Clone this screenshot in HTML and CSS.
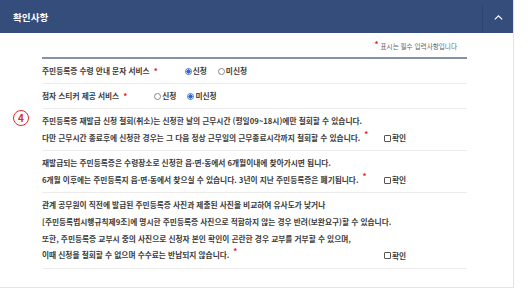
FILE: index.html
```html
<!DOCTYPE html>
<html lang="ko">
<head>
<meta charset="UTF-8">
<meta name="viewport" content="width=device-width, initial-scale=1.0">
<title>확인사항</title>
<link rel="stylesheet" href="styles.css">
</head>
<body>
<div class="panel">
    <div class="panel-head">
        <h2 class="panel-title">확인사항</h2>
        <button class="toggle" type="button" aria-label="접기">
            <svg width="9" height="5" viewBox="0 0 9 5"><path d="M0.8 4.4 L4.5 0.9 L8.2 4.4" fill="none" stroke="#fff" stroke-width="1.2"/></svg>
        </button>
    </div>

    <div class="panel-body">
        <p class="req-note"><span class="req">*</span> 표시는 필수 입력사항입니다</p>

        <span class="step-badge">4</span>

        <div class="confirm">
            <div class="row">
                <span class="label">주민등록증 수령 안내 문자 서비스</span><span class="req">*</span>
                <div class="radios">
                    <label><input type="radio" name="sms" checked>신청</label>
                    <label><input type="radio" name="sms">미신청</label>
                </div>
            </div>
            <div class="row">
                <span class="label">점자 스티커 제공 서비스</span><span class="req">*</span>
                <div class="radios">
                    <label><input type="radio" name="braille">신청</label>
                    <label><input type="radio" name="braille" checked>미신청</label>
                </div>
            </div>
            <div class="row notice">
                <div class="notice-text">
                    주민등록증 재발급 신청 철회(취소)는 신청한 날의 근무시간 (평일09~18시)에만 철회할 수 있습니다.<br>
                    다만 근무시간 종료후에 신청한 경우는 그 다음 정상 근무일의 근무종료시각까지 철회할 수 있습니다.<span class="req">*</span>
                </div>
                <label class="check"><input type="checkbox">확인</label>
            </div>
            <div class="row notice">
                <div class="notice-text">
                    재발급되는 주민등록증은 수령장소로 신청한 읍·면·동에서 6개월이내에 찾아가시면 됩니다.<br>
                    6개월 이후에는 주민등록지 읍·면·동에서 찾으실 수 있습니다. 3년이 지난 주민등록증은 폐기됩니다.<span class="req">*</span>
                </div>
                <label class="check"><input type="checkbox">확인</label>
            </div>
            <div class="row notice">
                <div class="notice-text">
                    관계 공무원이 직전에 발급된 주민등록증 사진과 제출된 사진을 비교하여 유사도가 낮거나<br>
                    [주민등록법시행규칙제9조]에 명시한 주민등록증 사진으로 적합하지 않는 경우 반려(보완요구)할 수 있습니다.<br>
                    또한, 주민등록증 교부시 중의 사진으로 신청자 본인 확인이 곤란한 경우 교부를 거부할 수 있으며,<br>
                    이때 신청을 철회할 수 없으며 수수료는 반납되지 않습니다.<span class="req">*</span>
                </div>
                <label class="check"><input type="checkbox">확인</label>
            </div>
        </div>
    </div>
</div>
</body>
</html>
```

FILE: styles.css
```css
body {
    margin: 0;
    font-family: "Noto Sans CJK KR", "Noto Sans", sans-serif;
    color: #333;
    background: #fff;
}
.panel {
    width: 514px;
    border-right: 1px solid #e4e4e4;
    border-bottom: 1px solid #e4e4e4;
    box-sizing: border-box;
}
.panel-head {
    display: flex;
    align-items: flex-end;
    height: 33px;
    background-color: #354d7b;
}
.panel-title {
    flex: 1;
    margin: 0;
    padding-left: 13px;
    align-self: center;
    font-size: 9.6px;
    font-weight: bold;
    color: #fff;
}
.toggle {
    width: 31px;
    height: 28px;
    padding: 0;
    border: none;
    border-left: 1px solid #2f4570;
    background: none;
    display: flex;
    align-items: center;
    justify-content: center;
    padding-bottom: 4px;
    cursor: pointer;
}
.panel-body {
    position: relative;
    padding: 8px 0 18px 42px;
}
.req-note {
    margin: 0 0 6px;
    width: 415px;
    text-align: right;
    font-size: 6.6px;
    line-height: 10px;
    color: #666;
}
.req {
    color: #e3141b;
    font-size: 8px;
    font-weight: bold;
    vertical-align: 4px;
    line-height: 0;
    margin-left: 4px;
}
.req-note .req {
    margin: 0;
    vertical-align: 2px;
}
.step-badge {
    position: absolute;
    left: 13px;
    top: 77px;
    width: 14px;
    height: 14px;
    border: 1.3px solid #e02b2b;
    border-radius: 50%;
    color: #e02b2b;
    font-size: 10px;
    font-weight: bold;
    line-height: 14px;
    text-align: center;
}
.confirm {
    width: 425px;
    border-top: 2px solid #8592a7;
}
.row {
    display: flex;
    align-items: center;
    padding: 4px 0;
    border-bottom: 1px solid #ececec;
    font-size: 7.7px;
    font-weight: bold;
    line-height: 16px;
    color: #3a3a3a;
}
.radios {
    display: flex;
    gap: 11px;
    margin-left: 27px;
}
.radios label,
.check {
    display: flex;
    align-items: center;
    gap: 1px;
}
input[type="radio"],
input[type="checkbox"] {
    appearance: none;
    margin: 0;
    width: 7px;
    height: 7px;
    border: 1px solid #8a8a8a;
    background: #fff;
    box-sizing: border-box;
}
input[type="radio"] {
    border-radius: 50%;
}
input[type="radio"]:checked {
    border-color: #3d76d3;
    background: radial-gradient(circle, #2a66cc 55%, #fff 62%);
}
input[type="checkbox"] {
    border-color: #555;
    border-radius: 1px;
}
.notice {
    align-items: flex-end;
    line-height: 16.6px;
}
.notice-text {
    width: 362px;
}
.check {
    margin-left: -20px;
    line-height: 16px;
}
```
